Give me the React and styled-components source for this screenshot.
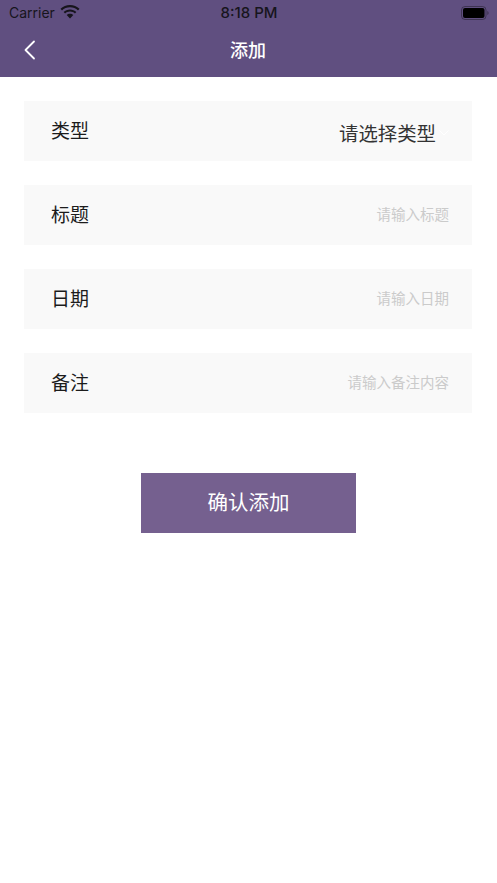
import styled, { createGlobalStyle } from "styled-components";

const GlobalStyle = createGlobalStyle`
  html, body {
    margin: 0;
    padding: 0;
    background: #fff;
    font-family: "Noto Sans CJK SC", "Noto Sans", sans-serif;
  }
  * { box-sizing: border-box; }
`;

const Page = styled.div`
  width: 497px;
  height: 883px;
  overflow: hidden;
  background: #fff;
`;

const Header = styled.header`
  height: 77px;
  background: #604f80;
`;

const StatusBar = styled.div`
  display: grid;
  grid-template-columns: 1fr auto 1fr;
  align-items: center;
  height: 25px;
  padding: 0 8px 0 9px;
  color: #17151c;
  font-family: Inter, "Liberation Sans", sans-serif;
`;

const Carrier = styled.div`
  display: flex;
  align-items: center;
  gap: 5px;
  font-size: 14px;
`;

const Clock = styled.div`
  font-size: 15px;
  font-weight: 500;
`;

const Battery = styled.div`
  display: flex;
  justify-self: end;
`;

const NavBar = styled.div`
  display: grid;
  grid-template-columns: 1fr auto 1fr;
  align-items: center;
  height: 50px;
  padding: 0 25px 0 24px;
`;

const Title = styled.h1`
  margin: 0 0 2px;
  color: #fff;
  font-size: 18px;
  font-weight: 500;
  line-height: 1;
`;

const Form = styled.main`
  display: flex;
  flex-direction: column;
  gap: 24px;
  padding: 24px 25px 0 24px;
`;

const Row = styled.div`
  display: flex;
  align-items: center;
  justify-content: space-between;
  height: 60px;
  padding: 0 23px 2px 27px;
  background: #f9f9f9;
`;

const Label = styled.span`
  margin-bottom: 2px;
  color: #1c1c1c;
  font-size: 19px;
  line-height: 1;
`;

const Placeholder = styled.span`
  color: #cbcbcb;
  font-size: 14.5px;
  line-height: 1;
`;

const Select = styled.div`
  display: flex;
  align-items: center;
  gap: 3px;
  padding-top: 6px;
`;

const SelectValue = styled.span`
  color: #333;
  font-size: 19.4px;
  line-height: 1;
`;

const Submit = styled.button`
  display: block;
  width: 215px;
  height: 60px;
  margin: 60px 0 0 141px;
  padding: 0 0 5px;
  border: 0;
  background: #75608f;
  color: #fff;
  font-family: inherit;
  font-size: 20.5px;
`;

const WifiIcon = () => (
  <svg width="20" height="15" viewBox="0 0 20 15" fill="#17151c">
    <path d="M10 2.2c3.1 0 5.9 1.2 8 3.2l1.500-1.600C17 1.400 13.700 0 10 0S3 1.400.500 3.800L2 5.400c2.100-2 4.900-3.200 8-3.200z" />
    <path d="M10 6.600c1.900 0 3.600.7 4.900 1.900l1.500-1.600C14.700 5.300 12.500 4.400 10 4.400s-4.700.9-6.400 2.500l1.500 1.600C6.400 7.300 8.100 6.600 10 6.600z" />
    <path d="M10 8.800c-1.300 0-2.400.5-3.300 1.300L10 13.600l3.300-3.500c-.9-.8-2-1.300-3.300-1.300z" />
  </svg>
);

const BatteryIcon = () => (
  <svg width="28" height="14" viewBox="0 0 28 14">
    <rect x="0.5" y="0.500" width="24.500" height="13" rx="3.500" fill="none" stroke="#17151c" strokeOpacity="0.45" />
    <rect x="2" y="2" width="21.500" height="10" rx="2" fill="#000" />
    <path d="M26.300 5v4c.8-.3 1.300-1.100 1.300-2s-.5-1.700-1.300-2z" fill="#17151c" fillOpacity="0.45" />
  </svg>
);

const BackIcon = () => (
  <svg width="12" height="20" viewBox="0 0 12 20" fill="none" stroke="#fff" strokeWidth="1.800" strokeLinecap="round" strokeLinejoin="round">
    <path d="M10 1.500L1.500 10l8.500 8.500" />
  </svg>
);

const ChevronIcon = () => (
  <svg width="10" height="6" viewBox="0 0 10 6" fill="none" stroke="#fff" strokeWidth="1">
    <path d="M.5.500L5 5l4.500-4.500" />
  </svg>
);

const fields = [
  { label: "标题", hint: "请输入标题" },
  { label: "日期", hint: "请输入日期" },
  { label: "备注", hint: "请输入备注内容" },
];

const App = () => (
  <Page>
    <GlobalStyle />
    <Header>
      <StatusBar>
        <Carrier>
          Carrier
          <WifiIcon />
        </Carrier>
        <Clock>8:18 PM</Clock>
        <Battery>
          <BatteryIcon />
        </Battery>
      </StatusBar>
      <NavBar>
        <BackIcon />
        <Title>添加</Title>
      </NavBar>
    </Header>
    <Form>
      <Row>
        <Label>类型</Label>
        <Select>
          <SelectValue>请选择类型</SelectValue>
          <ChevronIcon />
        </Select>
      </Row>
      {fields.map(f => (
        <Row key={f.label}>
          <Label>{f.label}</Label>
          <Placeholder>{f.hint}</Placeholder>
        </Row>
      ))}
    </Form>
    <Submit>确认添加</Submit>
  </Page>
);

export default App;
